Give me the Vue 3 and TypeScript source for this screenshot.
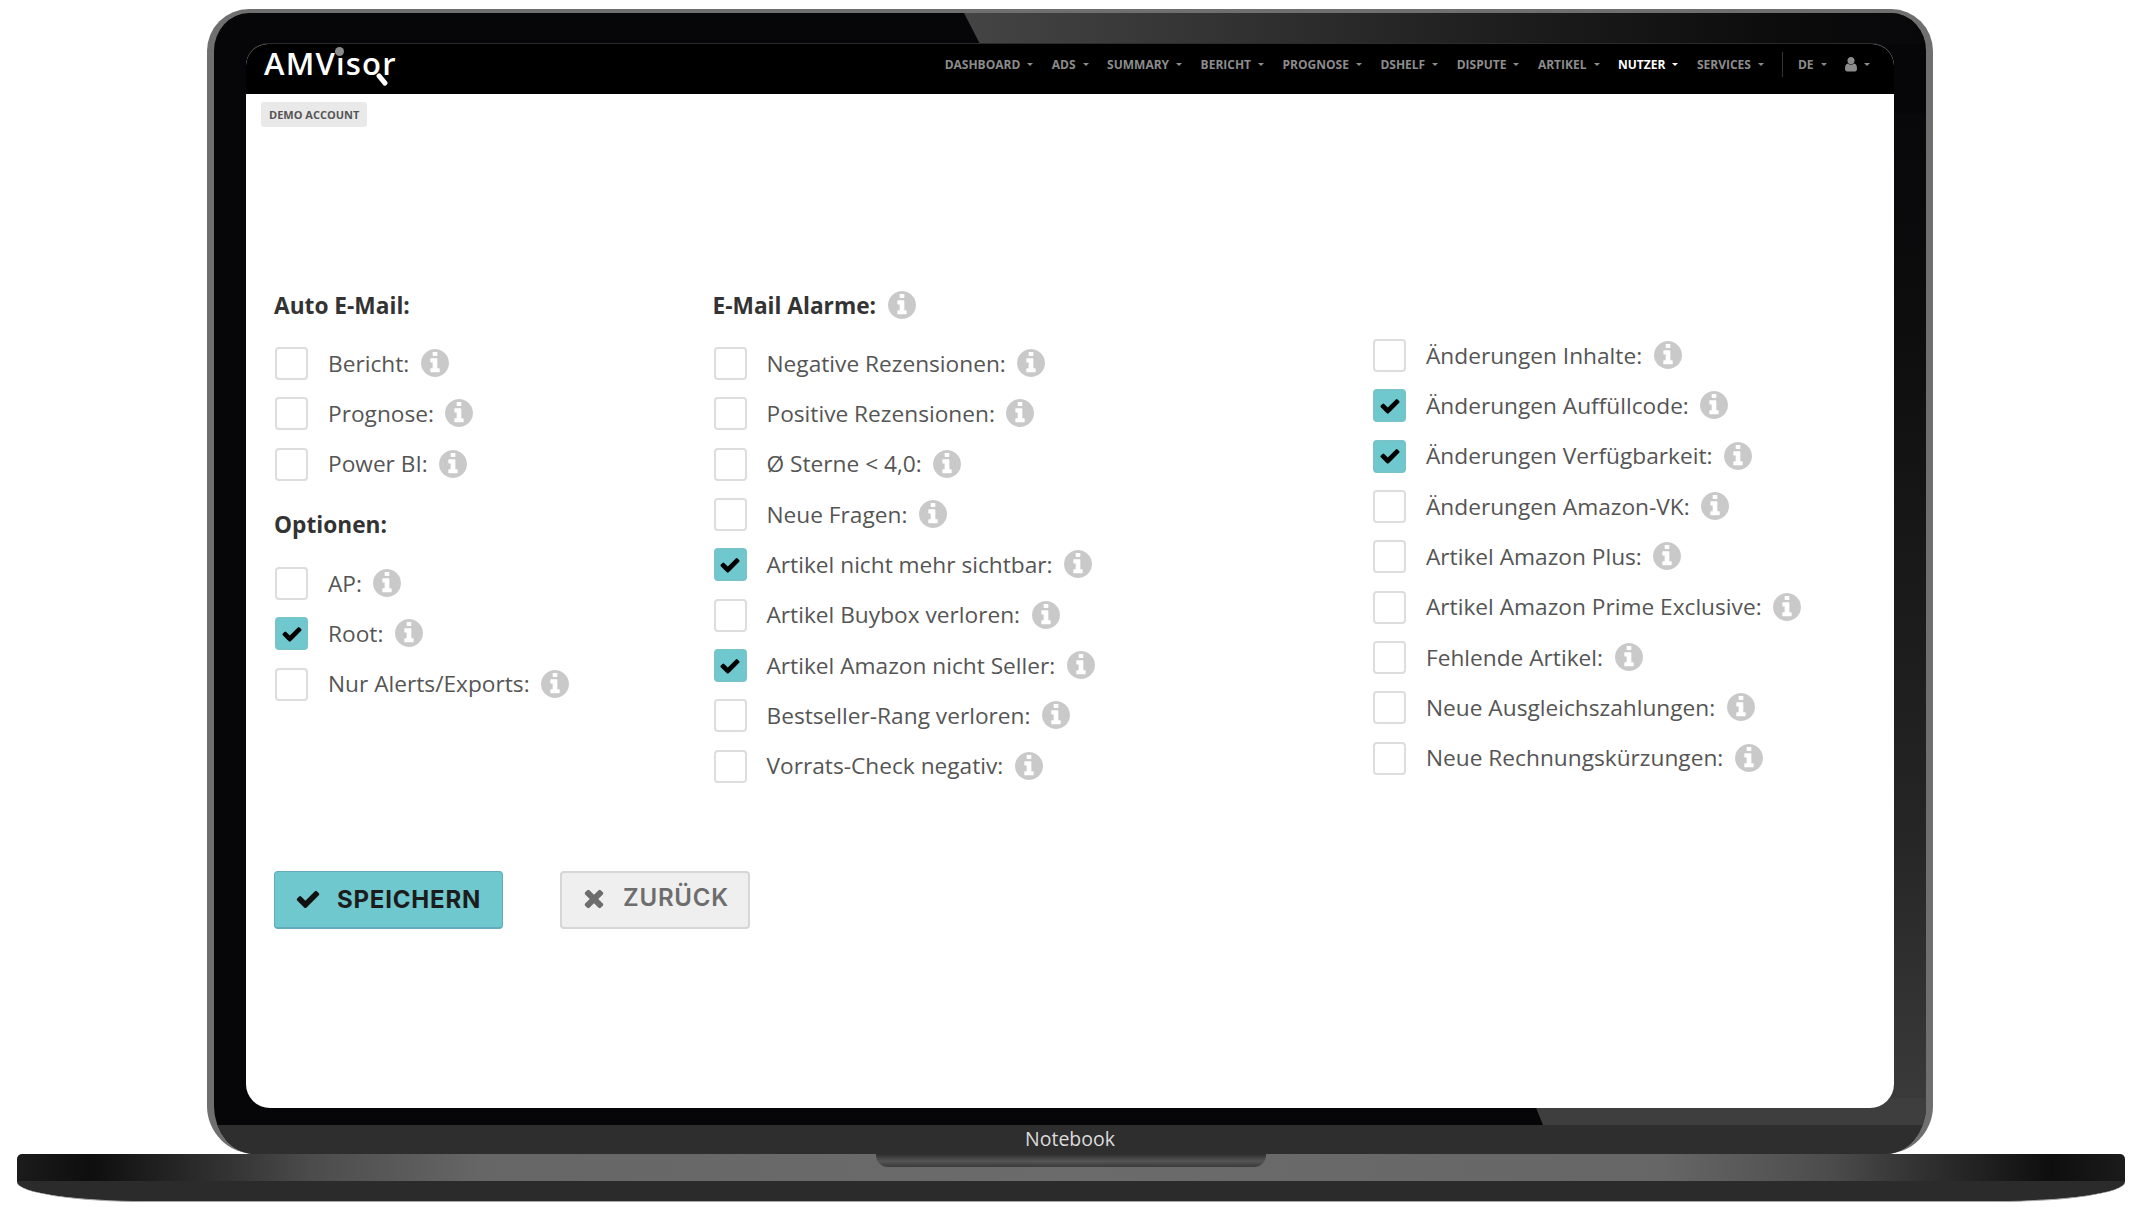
<script setup lang="ts">
interface Option {
  label: string;
  checked?: boolean;
}

interface Group {
  title?: string;
  titleInfo?: boolean;
  options: Option[];
}

interface Column {
  name: string;
  groups: Group[];
}

const menuItems = ['DASHBOARD', 'ADS', 'SUMMARY', 'BERICHT', 'PROGNOSE', 'DSHELF', 'DISPUTE', 'ARTIKEL', 'NUTZER', 'SERVICES'];

const columns: Column[] = [
  {
    name: 'col-auto',
    groups: [
      {
        title: 'Auto E-Mail:',
        options: [{ label: 'Bericht:' }, { label: 'Prognose:' }, { label: 'Power BI:' }]
      },
      {
        title: 'Optionen:',
        options: [{ label: 'AP:' }, { label: 'Root:', checked: true }, { label: 'Nur Alerts/Exports:' }]
      }
    ]
  },
  {
    name: 'col-alarm',
    groups: [
      {
        title: 'E-Mail Alarme:',
        titleInfo: true,
        options: [
          { label: 'Negative Rezensionen:' },
          { label: 'Positive Rezensionen:' },
          { label: 'Ø Sterne < 4,0:' },
          { label: 'Neue Fragen:' },
          { label: 'Artikel nicht mehr sichtbar:', checked: true },
          { label: 'Artikel Buybox verloren:' },
          { label: 'Artikel Amazon nicht Seller:', checked: true },
          { label: 'Bestseller-Rang verloren:' },
          { label: 'Vorrats-Check negativ:' }
        ]
      }
    ]
  },
  {
    name: 'col-changes',
    groups: [
      {
        options: [
          { label: 'Änderungen Inhalte:' },
          { label: 'Änderungen Auffüllcode:', checked: true },
          { label: 'Änderungen Verfügbarkeit:', checked: true },
          { label: 'Änderungen Amazon-VK:' },
          { label: 'Artikel Amazon Plus:' },
          { label: 'Artikel Amazon Prime Exclusive:' },
          { label: 'Fehlende Artikel:' },
          { label: 'Neue Ausgleichszahlungen:' },
          { label: 'Neue Rechnungskürzungen:' }
        ]
      }
    ]
  }
];

const checkPath =
  'M1671 566q0 40-28 68l-724 724-136 136q-28 28-68 28t-68-28l-136-136-362-362q-28-28-28-68t28-68l136-136q28-28 68-28t68 28l294 295 656-657q28-28 68-28t68 28l136 136q28 28 28 68z';
const timesPath =
  'M1298 1322q0 40-28 68l-136 136q-28 28-68 28t-68-28l-294-294-294 294q-28 28-68 28t-68-28l-136-136q-28-28-28-68t28-68l294-294-294-294q-28-28-28-68t28-68l136-136q28-28 68-28t68 28l294 294 294-294q28-28 68-28t68 28l136 136q28 28 28 68t-28 68l-294 294 294 294q28 28 28 68z';
const infoPath =
  'M1024 1376v-160q0-14-9-23t-23-9h-96v-512q0-14-9-23t-23-9h-320q-14 0-23 9t-9 23v160q0 14 9 23t23 9h96v320h-96q-14 0-23 9t-9 23v160q0 14 9 23t23 9h448q14 0 23-9t9-23zm-128-896v-160q0-14-9-23t-23-9h-192q-14 0-23 9t-9 23v160q0 14 9 23t23 9h192q14 0 23-9t9-23zm640 416q0 209-103 385.500t-279.500 279.500-385.500 103-385.500-103-279.500-279.500-103-385.500 103-385.500 279.500-279.500 385.500-103 385.500 103 279.500 279.500 103 385.500z';
const userPath =
  'M1536 1399q0 109-62.500 187t-150.500 78h-854q-88 0-150.500-78t-62.500-187q0-85 8.500-160.500t31.500-152 58.500-131 94-89 134.500-34.500q131 128 313 128t313-128q76 0 134.500 34.500t94 89 58.500 131 31.500 152 8.500 160.500zm-256-887q0 159-112.500 271.500t-271.500 112.500-271.500-112.500-112.500-271.500 112.500-271.500 271.500-112.500 271.500 112.500 112.500 271.500z';
</script>

<template>
  <div class="stage">
    <div class="lid">
      <svg class="sheen" viewBox="0 0 1712 1141" preserveAspectRatio="none">
        <defs>
          <linearGradient id="sheenTop" x1="0" y1="0" x2="1" y2="0">
            <stop offset="0" stop-color="#444444" />
            <stop offset="0.25" stop-color="#343434" />
            <stop offset="0.6" stop-color="#1b1b1b" />
            <stop offset="0.85" stop-color="#0c0c0d" />
            <stop offset="1" stop-color="#08080a" />
          </linearGradient>
          <linearGradient id="sheenSide" x1="0" y1="0" x2="0" y2="1">
            <stop offset="0" stop-color="#08080a" />
            <stop offset="0.2" stop-color="#0d0d0e" />
            <stop offset="0.7" stop-color="#262626" />
            <stop offset="1" stop-color="#3e3e3e" />
          </linearGradient>
        </defs>
        <polygon points="750,0 1712,0 1712,31 766,31" fill="url(#sheenTop)" />
        <rect x="1640" y="100" width="72" height="1041" fill="url(#sheenSide)" />
        <polygon points="1318,1085 1712,1085 1712,1112 1329,1112" fill="#3e3e3e" />
      </svg>

      <div class="bezel">
        <div class="screen">
          <header class="top-nav">
            <div class="logo">
              <span class="logo-text">AMVısor</span>
              <span class="logo-dot"></span>
              <span class="logo-handle"></span>
            </div>
            <nav class="nav-menu">
              <a v-for="item in menuItems" :key="item" class="nav-btn" :class="{ active: item === 'NUTZER' }">
                {{ item }}<span class="caret"></span>
              </a>
              <span class="nav-divider"></span>
              <a class="nav-btn">DE<span class="caret"></span></a>
              <a class="nav-btn">
                <svg class="user-icon" viewBox="256 128 1280 1536"><path :d="userPath" fill="currentColor" /></svg>
                <span class="caret"></span>
              </a>
            </nav>
          </header>

          <main class="content">
            <span class="demo-badge">DEMO ACCOUNT</span>

            <div class="columns">
              <section v-for="col in columns" :key="col.name" class="column" :class="col.name">
                <div v-for="(group, i) in col.groups" :key="i" class="group">
                  <h3 v-if="group.title" class="group-title">
                    {{ group.title }}
                    <svg v-if="group.titleInfo" class="info" viewBox="0 128 1536 1536"><path :d="infoPath" /></svg>
                  </h3>
                  <label v-for="opt in group.options" :key="opt.label" class="option">
                    <span class="check" :class="{ checked: opt.checked }">
                      <svg v-if="opt.checked" viewBox="0 0 1792 1792"><path :d="checkPath" /></svg>
                    </span>
                    <span class="option-label">{{ opt.label }}</span>
                    <svg class="info" viewBox="0 128 1536 1536"><path :d="infoPath" /></svg>
                  </label>
                </div>
              </section>
            </div>

            <div class="actions">
              <button class="btn btn-save">
                <svg viewBox="0 0 1792 1792"><path :d="checkPath" /></svg>
                SPEICHERN
              </button>
              <button class="btn btn-back">
                <svg viewBox="0 0 1408 1792"><path :d="timesPath" /></svg>
                ZURÜCK
              </button>
            </div>
          </main>
        </div>
      </div>

      <div class="chin">Notebook</div>
    </div>

    <div class="base">
      <div class="base-top"><div class="notch"></div></div>
      <div class="base-bottom"></div>
    </div>
  </div>
</template>

<style>
html,
body {
  margin: 0;
  background: #ffffff;
}
</style>

<style scoped>
.stage {
  width: 2133px;
  height: 1215px;
  padding: 9px 0 0 17px;
  box-sizing: border-box;
  overflow: hidden;
  font-family: "Open Sans", "Liberation Sans", sans-serif;
}

.lid {
  position: relative;
  width: 1726px;
  height: 1145px;
  margin-left: 190px;
  box-sizing: border-box;
  display: flex;
  flex-direction: column;
  border: solid #6f6f6f;
  border-width: 4px 7px 0;
  border-radius: 42px 42px 48px 48px;
  background: #060608;
  overflow: hidden;
}

.sheen {
  position: absolute;
  inset: 0;
  width: 100%;
  height: 100%;
}

.bezel {
  position: relative;
  padding: 31px 32px 17px;
}

.screen {
  height: 1064px;
  display: flex;
  flex-direction: column;
  background: #ffffff;
  border-radius: 22px 22px 24px 24px;
  box-shadow: 0 -1px 0 #2b2b2b;
}

.top-nav {
  display: flex;
  align-items: flex-start;
  justify-content: space-between;
  height: 50px;
  box-sizing: border-box;
  padding: 8px 24px 0 18px;
  background: #000000;
  border-radius: 22px 22px 0 0;
  flex-shrink: 0;
}

.logo {
  position: relative;
  height: 30px;
}

.logo-text {
  display: block;
  font-size: 31px;
  font-weight: 600;
  line-height: 23px;
  letter-spacing: 1.2px;
  color: #ffffff;
}

.logo-dot {
  position: absolute;
  left: 71px;
  top: -5px;
  width: 9px;
  height: 9px;
  border-radius: 50%;
  background: #8a8a8a;
}

.logo-handle {
  position: absolute;
  left: 111px;
  top: 25px;
  width: 14px;
  height: 5px;
  border-radius: 2px;
  background: #ffffff;
  transform: rotate(50deg);
}

.nav-menu {
  display: flex;
  align-items: center;
  gap: 18.5px;
  height: 25px;
}

.nav-btn {
  display: flex;
  align-items: center;
  gap: 7px;
  font-size: 12px;
  font-weight: 700;
  line-height: 25px;
  color: #8c8c8c;
}

.nav-btn.active {
  color: #ffffff;
}

.caret {
  width: 0;
  height: 0;
  border-top: 3.5px solid currentColor;
  border-left: 3.5px solid transparent;
  border-right: 3.5px solid transparent;
}

.nav-divider {
  width: 1px;
  height: 25px;
  margin-right: -4px;
  background: #333333;
}

.user-icon {
  width: 12px;
  height: 14.4px;
}

.content {
  flex: 1;
  display: flex;
  flex-direction: column;
  align-items: flex-start;
  padding: 8px 0 0 15px;
}

.demo-badge {
  height: 25px;
  padding: 0 8px;
  font-size: 11px;
  font-weight: 700;
  line-height: 25px;
  color: #555555;
  background: #e9e9e9;
  border-radius: 3px;
}

.columns {
  display: flex;
  margin: 161px 0 0 13px;
}

.col-auto {
  width: 438.5px;
}

.col-alarm {
  width: 659.5px;
}

.col-changes {
  padding-top: 42px;
}

.group + .group {
  margin-top: 19px;
}

.group-title {
  display: flex;
  align-items: center;
  gap: 12px;
  height: 34px;
  margin: 0 0 16px;
  font-size: 22.7px;
  font-weight: 700;
  color: #333333;
}

.option {
  display: flex;
  align-items: center;
  height: 50.33px;
}

.check {
  width: 33px;
  height: 33px;
  box-sizing: border-box;
  display: flex;
  align-items: center;
  justify-content: center;
  margin: 1px 20px 0 1px;
  border: 2px solid #dddddd;
  border-radius: 4px;
  background: #ffffff;
}

.check.checked {
  background: #6fc8ce;
  border-color: #76c4ca;
}

.check svg {
  width: 22px;
  height: 22px;
}

.option-label {
  font-size: 22.7px;
  color: #555555;
  white-space: nowrap;
}

.info {
  width: 28px;
  height: 28px;
  margin-left: 11.5px;
  fill: #c9c9c9;
  flex-shrink: 0;
}

.group-title .info {
  margin-left: 0;
}

.actions {
  display: flex;
  gap: 57px;
  margin: 80px 0 0 13px;
}

.btn {
  display: flex;
  align-items: center;
  height: 58px;
  box-sizing: border-box;
  font-family: Inter, "Liberation Sans", sans-serif;
  font-size: 24px;
  font-weight: 700;
  letter-spacing: 0.8px;
  border-radius: 4px;
}

.btn-save {
  width: 229px;
  gap: 16px;
  padding: 0 0 0 20px;
  color: #1c1c1c;
  background: #6fc8ce;
  border: 1px solid #64a9bd;
  border-bottom-width: 2px;
}

.btn-save svg {
  width: 26px;
  height: 26px;
  fill: #111111;
}

.btn-back {
  width: 190px;
  gap: 18px;
  padding: 0 0 4px 21px;
  font-weight: 600;
  color: #6d6d6d;
  background: #efefef;
  border: 2px solid #d6d6d6;
}

.btn-back svg {
  width: 22px;
  height: 28px;
  fill: #6d6d6d;
}

.chin {
  position: relative;
  height: 29px;
  font-size: 19.5px;
  line-height: 27px;
  text-align: center;
  color: #dcdcdc;
  background: #2e2e2e;
}

.base {
  width: 2108px;
}

.base-top {
  display: flex;
  justify-content: center;
  height: 27px;
  border-radius: 5px 5px 0 0;
  background: linear-gradient(
    90deg,
    #1b1b1b 0,
    #0e0e0f 3.5%,
    #333333 10%,
    #4c4c4c 14%,
    #666666 22%,
    #6b6b6b 50%,
    #666666 78%,
    #4c4c4c 86%,
    #333333 90%,
    #0e0e0f 96.5%,
    #1b1b1b 100%
  );
}

.notch {
  width: 390px;
  height: 13px;
  border-radius: 0 0 12px 12px;
  background: linear-gradient(180deg, #2e2e2e, #555555 55%, #3a3a3a);
}

.base-bottom {
  height: 21px;
  background: #2b2b2b;
  border-bottom: 1px solid #a8a8a8;
  box-sizing: border-box;
  border-radius: 0 0 130px 130px / 0 0 20px 20px;
}
</style>
